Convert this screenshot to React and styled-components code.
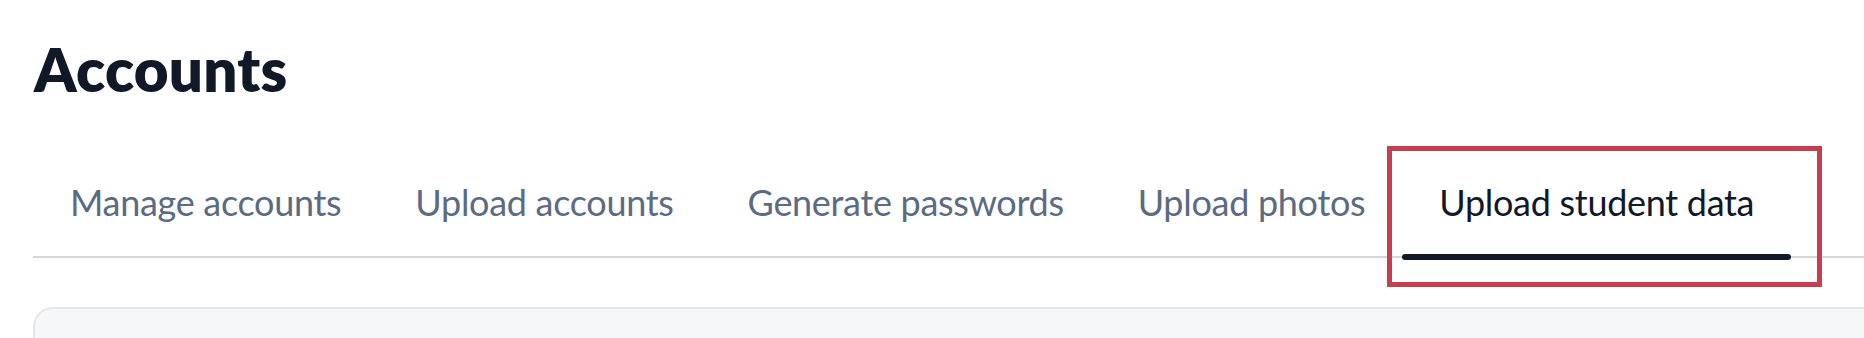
import React from "react";
import styled, { createGlobalStyle } from "styled-components";

const GlobalStyle = createGlobalStyle`
  html, body {
    margin: 0;
    padding: 0;
    background: #ffffff;
    overflow: hidden;
  }
  body {
    font-family: "Lato", "Inter", sans-serif;
  }
`;

const Page = styled.div`
  padding: 39px 0 0 33px;
  width: calc(100% + 40px);
  box-sizing: border-box;
`;

const Title = styled.h1`
  margin: 0 0 0 1px;
  font-family: "Lato", sans-serif;
  font-size: 60px;
  line-height: 1;
  font-weight: 800;
  color: #111827;
  letter-spacing: 0.2px;
`;

const TabList = styled.nav`
  display: flex;
  margin-top: 85px;
  border-bottom: 2px solid #d4d6da;
`;

const Tab = styled.div`
  position: relative;
  padding: 0 37px 36px;
  font-size: 36px;
  line-height: 1;
  font-weight: 400;
  letter-spacing: -0.3px;
  white-space: nowrap;
  color: ${(p) => (p.$active ? "#111827" : "#5b6b82")};

  &::after {
    content: "";
    display: ${(p) => (p.$active ? "block" : "none")};
    position: absolute;
    left: 0;
    right: 0;
    bottom: -4px;
    height: 6px;
    border-radius: 3px;
    background: #111827;
  }
`;

const Highlight = styled.span`
  position: absolute;
  top: -38px;
  left: -15px;
  right: -31px;
  bottom: -31px;
  border: 5px solid #c83e4f;
  pointer-events: none;
`;

const Panel = styled.section`
  margin-top: 49px;
  height: 220px;
  background: #f6f7f9;
  border: 2px solid #e6e7eb;
  border-radius: 20px;
`;

const tabs = [
  "Manage accounts",
  "Upload accounts",
  "Generate passwords",
  "Upload photos",
  "Upload student data",
];

export default function App() {
  const active = 4;
  return (
    <>
      <GlobalStyle />
      <Page>
        <Title>Accounts</Title>
        <TabList>
          {tabs.map((t, i) => (
            <Tab key={t} $active={i === active}>
              {t}
              {i === active && <Highlight />}
            </Tab>
          ))}
        </TabList>
        <Panel />
      </Page>
    </>
  );
}
